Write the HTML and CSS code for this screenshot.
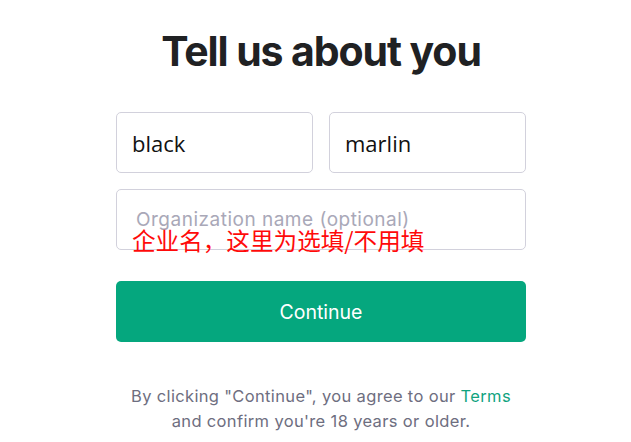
FILE: index.html
```html
<!DOCTYPE html>
<html lang="en">
<head>
<meta charset="utf-8">
<title>Tell us about you</title>
<link rel="stylesheet" href="styles.css">
</head>
<body>
<main class="form">
  <h1 class="title">Tell us about you</h1>
  <div class="row">
    <div class="field"><span class="value">black</span></div>
    <div class="field"><span class="value">marlin</span></div>
  </div>
  <div class="field field-org">
    <span class="placeholder">Organization name (optional)</span>
    <span class="note">企业名，这里为选填/不用填</span>
  </div>
  <button class="btn" type="button">Continue</button>
  <p class="legal">By clicking "Continue", you agree to our <a class="link" href="#">Terms</a><br>and confirm you're 18 years or older.</p>
</main>
</body>
</html>
```
FILE: styles.css
```css
html, body {
  margin: 0;
  padding: 0;
  background: #ffffff;
}

.form {
  width: 410px;
  margin-left: 116px;
  display: flex;
  flex-direction: column;
  font-family: Inter, "Noto Sans", sans-serif;
}

.title {
  margin: 26px 0 0;
  font-size: 41px;
  line-height: 50px;
  font-weight: 700;
  color: #202123;
  text-align: center;
  letter-spacing: -1.1px;
}

.row {
  display: flex;
  gap: 16px;
  margin-top: 36px;
}

.field {
  flex: 1;
  height: 61px;
  box-sizing: border-box;
  border: 1px solid #d2d1dc;
  border-radius: 5px;
  display: flex;
  align-items: center;
  padding: 0 15px;
  background: #fff;
}

.value {
  font-family: "Open Sans", "Noto Sans", sans-serif;
  font-size: 22px;
  color: #111111;
}

.field-org {
  position: relative;
  flex: none;
  margin-top: 16px;
  padding-left: 19px;
}

.placeholder {
  font-size: 19px;
  letter-spacing: 0.5px;
  color: #a9a8b8;
}

.note {
  position: absolute;
  left: 15px;
  top: 39px;
  font-family: "Noto Sans CJK SC", sans-serif;
  font-size: 23.6px;
  line-height: 1;
  color: #ff0a0a;
  white-space: nowrap;
}

.btn {
  margin-top: 31px;
  height: 61px;
  border: none;
  border-radius: 5px;
  background: #05a77e;
  color: #ffffff;
  font-family: Inter, "Noto Sans", sans-serif;
  font-size: 19.5px;
  padding: 0;
}

.legal {
  margin: 42px -30px 0;
  text-align: center;
  font-size: 16.5px;
  line-height: 25px;
  letter-spacing: 0.35px;
  color: #6e6e80;
}

.link {
  color: #10a37f;
  text-decoration: none;
}
```
